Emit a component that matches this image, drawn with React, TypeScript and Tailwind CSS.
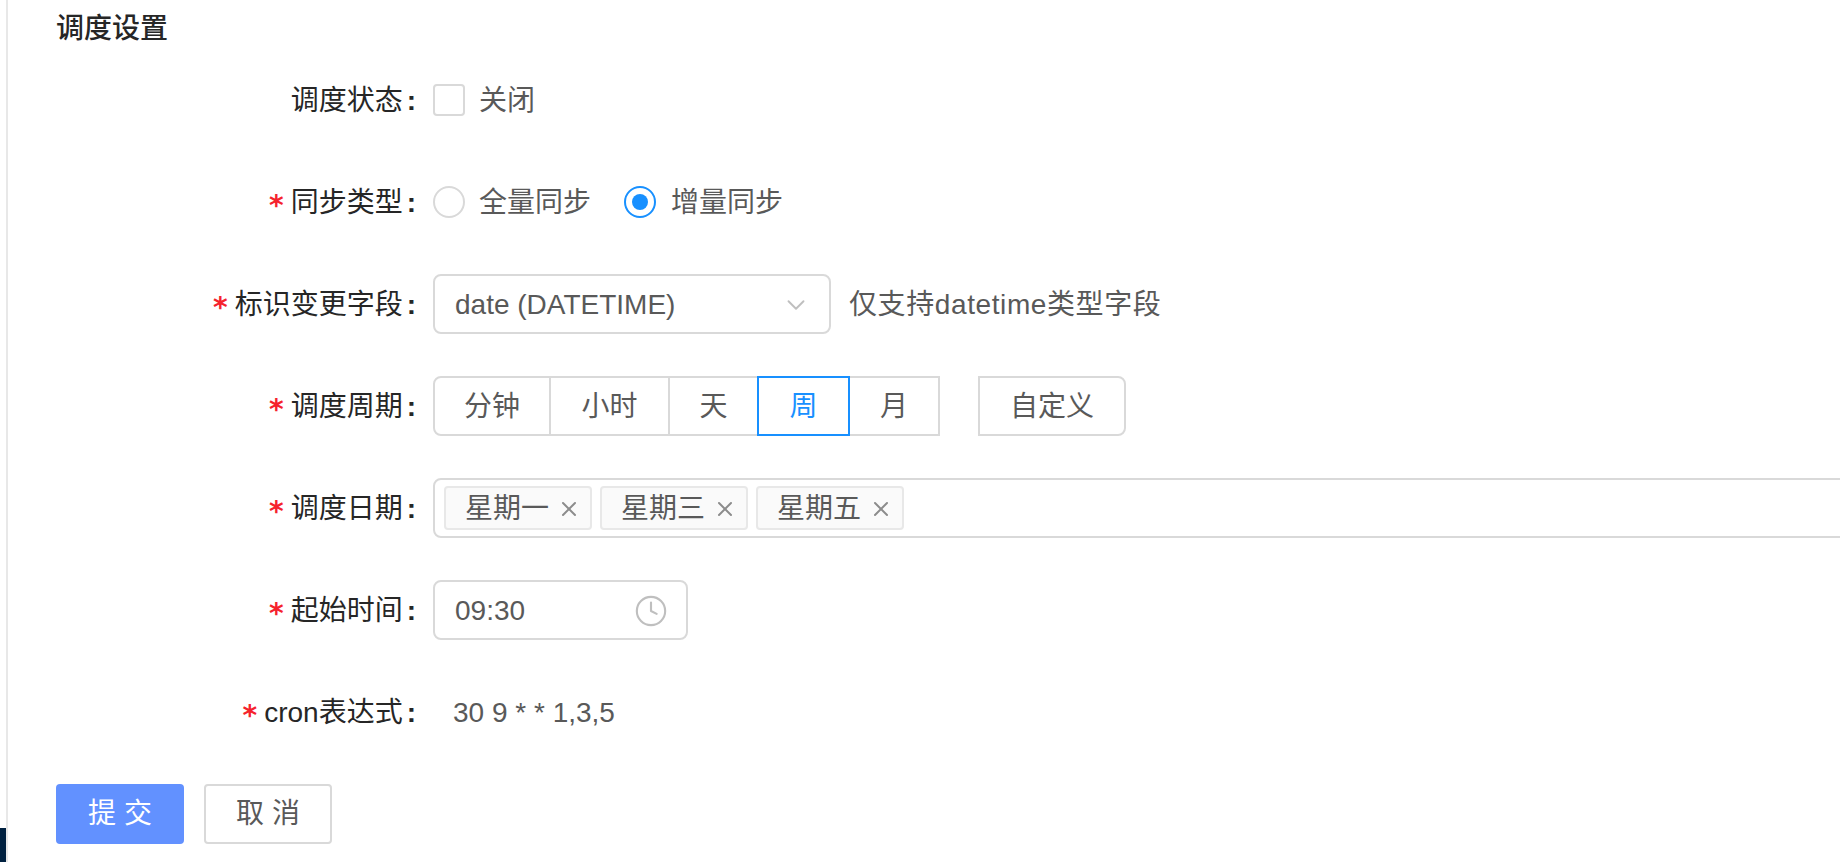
import React from 'react';
import { ChevronDown, Clock, X } from 'lucide-react';

const periods = [
  { name: '分钟', width: 'w-[118px]', first: true },
  { name: '小时', width: 'w-[121px]' },
  { name: '天', width: 'w-[91px]' },
  { name: '周', width: 'w-[93px]', active: true },
  { name: '月', width: 'w-[92px]' },
];

const days = ['星期一', '星期三', '星期五'];

const FormRow: React.FC<{ label: string; required?: boolean; children: React.ReactNode }> = ({
  label,
  required,
  children,
}) => (
  <div className="flex items-center h-[60px]">
    <div className="w-[377px] shrink-0 flex items-center justify-end pr-[17px] pt-[2px] text-[#262626]">
      {required && (
        <span className="mr-[7px] pt-[6px] text-[28px] font-bold text-[#f5222d] font-['DejaVu_Sans',sans-serif]">*</span>
      )}
      <span>{label}</span>
      <span className="ml-[4px] font-bold">:</span>
    </div>
    {children}
  </div>
);

const App: React.FC = () => {
  return (
    <div className="flex w-[1840px] h-[862px] overflow-hidden bg-white text-[28px] leading-[40px] text-[#595959] font-['Liberation_Sans','Noto_Sans_CJK_SC',sans-serif]">
      {/* Sidebar edge */}
      <div className="w-[6px] shrink-0 flex flex-col justify-end">
        <div className="h-[34px] bg-[#002140]" />
      </div>
      <div className="flex-1 min-w-0 border-l-2 border-[#e8e8e8] pl-[48px]">
        <h2 className="mt-[9px] font-medium text-[#262626]">调度设置</h2>

        <div className="mt-[21px] flex flex-col gap-[42px]">
          <FormRow label="调度状态">
            <span className="w-[32px] h-[32px] rounded-[4px] border-2 border-[#d9d9d9] bg-white" />
            <span className="ml-[14px] pt-[2px]">关闭</span>
          </FormRow>

          <FormRow label="同步类型" required>
            <span className="w-[32px] h-[32px] rounded-full border-2 border-[#d9d9d9] bg-white" />
            <span className="ml-[14px] pt-[2px]">全量同步</span>
            <span className="ml-[33px] w-[32px] h-[32px] rounded-full border-2 border-[#1890ff] flex items-center justify-center">
              <span className="w-[16px] h-[16px] rounded-full bg-[#1890ff]" />
            </span>
            <span className="ml-[15px] pt-[2px]">增量同步</span>
          </FormRow>

          <FormRow label="标识变更字段" required>
            <div className="w-[398px] h-[60px] pt-[2px] rounded-[8px] border-2 border-[#d9d9d9] flex items-center justify-between pl-[20px] pr-[18px]">
              <span>date (DATETIME)</span>
              <ChevronDown className="w-[30px] h-[30px] text-[#bfbfbf]" strokeWidth={1.5} />
            </div>
            <span className="ml-[18px] pt-[2px] tracking-[0.6px]">仅支持datetime类型字段</span>
          </FormRow>

          <FormRow label="调度周期" required>
            <div className="flex">
              {periods.map((p) => (
                <div
                  key={p.name}
                  className={`${p.width} h-[60px] pt-[2px] flex items-center justify-center border-2 -ml-[2px] first:ml-0 ${
                    p.active ? 'relative border-[#1890ff] text-[#1890ff]' : 'border-[#d9d9d9]'
                  } ${p.first ? 'rounded-l-[8px]' : ''}`}
                >
                  {p.name}
                </div>
              ))}
            </div>
            <div className="ml-[38px] w-[148px] h-[60px] pt-[2px] flex items-center justify-center border-2 border-[#d9d9d9] rounded-r-[8px]">
              自定义
            </div>
          </FormRow>

          <FormRow label="调度日期" required>
            <div className="w-[1500px] shrink-0 h-[60px] rounded-[8px] border-2 border-[#d9d9d9] flex items-center gap-[8px] pl-[9px]">
              {days.map((d) => (
                <div
                  key={d}
                  className="w-[148px] h-[44px] pt-[1px] rounded-[4px] border-2 border-[#e8e8e8] bg-[#fafafa] flex items-center pl-[19px]"
                >
                  <span>{d}</span>
                  <X className="ml-[8px] w-[24px] h-[24px] text-[#8c8c8c]" strokeWidth={2} />
                </div>
              ))}
            </div>
          </FormRow>

          <FormRow label="起始时间" required>
            <div className="w-[255px] h-[60px] pt-[2px] rounded-[8px] border-2 border-[#d9d9d9] flex items-center justify-between pl-[20px] pr-[18px]">
              <span>09:30</span>
              <Clock className="w-[34px] h-[34px] text-[#bfbfbf]" strokeWidth={1.5} />
            </div>
          </FormRow>

          <FormRow label="cron表达式" required>
            <span className="ml-[20px] pt-[2px]">30 9 * * 1,3,5</span>
          </FormRow>
        </div>

        <div className="mt-[42px] flex gap-[20px]">
          <button className="w-[128px] h-[60px] pl-[8px] rounded-[4px] bg-[#6291ff] text-white tracking-[8px]">提交</button>
          <button className="w-[128px] h-[60px] pl-[8px] rounded-[4px] border-2 border-[#d9d9d9] bg-white tracking-[8px]">取消</button>
        </div>
      </div>
    </div>
  );
};

export default App;
